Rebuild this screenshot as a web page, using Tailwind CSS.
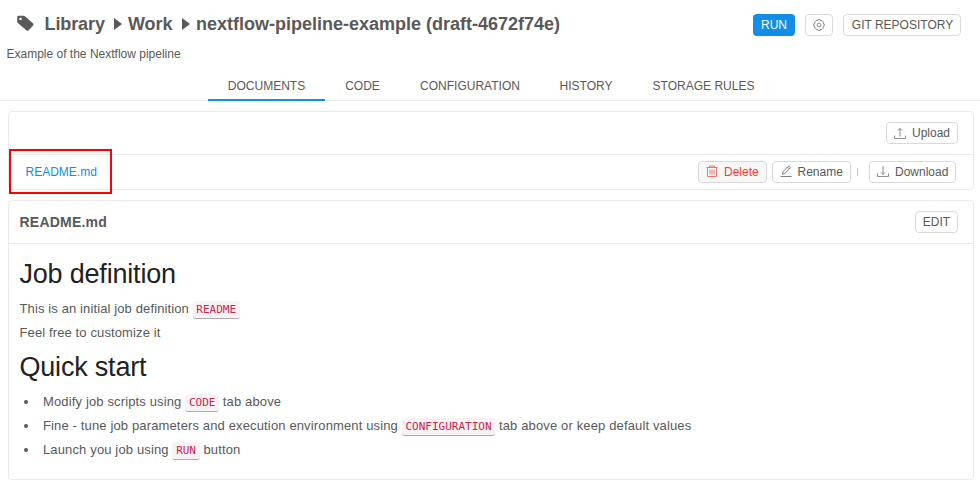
<!DOCTYPE html>
<html lang="en">
<head>
<meta charset="utf-8">
<title>nextflow-pipeline-example</title>
<script src="https://cdn.jsdelivr.net/npm/@tailwindcss/browser@4"></script>
</head>
<body class="h-[489px] overflow-hidden bg-white font-['Liberation_Sans',Arial,sans-serif] text-[12px] leading-[18px] text-[#595959]">
<header class="flex h-[45px] items-start justify-between pl-[17px] pr-[19px] pt-[14px]">
  <h1 class="flex h-[20px] items-center text-[18px] font-bold leading-[20px] whitespace-nowrap">
    <svg class="relative -top-px mr-[10.5px] h-[17px] w-[17px]" viewBox="0 0 17 17" fill="#595959"><path fill-rule="evenodd" d="M1.500.7H6.500q1 0 1.700.7l7.900 7.200q.9.900 0 1.800l-4.600 5q-.9.900-1.800 0L1.100 8.300Q.2 7.500.2 6.500V1.900Q.2.700 1.500.7ZM3.500 2.500a1.300 1.300 0 1 0 .01 0Z"/></svg>
    <span class="w-[61px] tracking-[-0.1px]">Library</span>
    <svg class="ml-[8.5px] mr-[6px] h-[12px] w-[8px]" viewBox="0 0 8 12"><path d="M0 0L8 6L0 12Z" fill="#595959"/></svg>
    <span class="w-[45px] tracking-[-0.05px]">Work</span>
    <svg class="ml-[9px] mr-[6px] h-[12px] w-[8px]" viewBox="0 0 8 12"><path d="M0 0L8 6L0 12Z" fill="#595959"/></svg>
    <span>nextflow-pipeline-example (draft-4672f74e)</span>
  </h1>
  <div class="flex gap-[10px]">
    <button class="flex h-[22px] w-[42px] items-center justify-center rounded-[4px] bg-[#108ee9] text-white">RUN</button>
    <button class="flex h-[22px] w-[28px] items-center justify-center rounded-[4px] border border-[#d9d9d9]">
      <svg class="h-[12px] w-[12px]" viewBox="0 0 12 12" fill="none" stroke="#808080" stroke-width=".9"><path d="M4.900.6h2.200l.5 1.200 1.300-.3 1.400 1.500-.3 1.200 1.200.7v2.200l-1.200.7.3 1.200-1.400 1.500-1.300-.3-.5 1.200H4.900l-.5-1.200-1.300.3L1.700 9 2 7.800.8 7.100V4.900L2 4.200 1.700 3l1.400-1.500 1.300.3Z"/><circle cx="6" cy="6" r="1.900"/></svg>
    </button>
    <button class="flex h-[22px] w-[118px] items-center justify-center rounded-[4px] border border-[#d9d9d9] pl-px whitespace-nowrap">GIT REPOSITORY</button>
  </div>
</header>
<p class="h-[26px] pl-[6.5px]">Example of the Nextflow pipeline</p>
<nav class="flex h-[30px] border-b border-[#e9e9e9] pl-[208px] whitespace-nowrap">
  <a class="h-[30px] w-[117px] border-b-2 border-[#108ee9] pt-[6px] text-center">DOCUMENTS</a>
  <a class="w-[75px] pt-[6px] text-center">CODE</a>
  <a class="w-[140px] pt-[6px] text-center">CONFIGURATION</a>
  <a class="w-[92px] pt-[6px] text-center">HISTORY</a>
  <a class="w-[143px] pt-[6px] text-center">STORAGE RULES</a>
</nav>
<main class="pl-[8px] pr-[6px] pt-[10px]">
  <section class="h-[79px] rounded-[4px] border border-[#e9e9e9]">
    <div class="flex h-[43px] items-center justify-end border-b border-[#e9e9e9] pr-[15px]">
      <button class="flex h-[22px] w-[72px] items-center rounded-[4px] border border-[#d9d9d9] pl-[7px]">
        <svg class="mr-[6px] h-[12px] w-[12px]" viewBox="0 0 12 12" fill="none" stroke="#808080" stroke-width=".9"><path d="M.5 8.500v3h11v-3M6 9.500V1.500M3.800 3.700L6 1.500 8.200 3.700"/></svg><span>Upload</span>
      </button>
    </div>
    <div class="relative flex h-[34px] items-center justify-between pl-[16.5px] pr-[17px]">
      <div class="absolute left-0 -top-[6px] h-[45px] w-[103px] border-2 border-[#f00]"></div>
      <a class="text-[#108ee9]">README.md</a>
      <div class="flex items-center">
        <button class="flex h-[22px] w-[69px] items-center rounded-[4px] border border-[#d9d9d9] bg-[#f7f7f7] pl-[7px] text-[#f04134]">
          <svg class="relative -top-px mr-[6px] h-[12px] w-[12px]" viewBox="0 0 12 12" fill="none" stroke="#f4554b" stroke-width=".8"><path d="M.5 2.500h11M3.500 2.500v-1.500h5v1.500M1.500 2.500v9h9v-9M4 4.500v5M6 4.500v5M8 4.500v5"/></svg><span>Delete</span>
        </button>
        <button class="ml-[5px] flex h-[22px] w-[79px] items-center rounded-[4px] border border-[#d9d9d9] pl-[7px]">
          <svg class="relative -top-px mr-[5.500px] h-[12px] w-[12px]" viewBox="0 0 12 12" fill="none" stroke="#707070" stroke-width=".9"><path d="M.5 11.500h11M2.500 9.300l.6-2.700L8.700.900l1.800 1.700-5.600 5.900ZM7.500 2.100l1.800 1.800"/></svg><span>Rename</span>
        </button>
        <i class="ml-[6px] h-[8px] w-px bg-[#c4c4c4]"></i>
        <button class="ml-[11px] flex h-[22px] w-[87px] items-center rounded-[4px] border border-[#d9d9d9] pl-[7px]">
          <svg class="relative -top-px mr-[6px] h-[12px] w-[12px]" viewBox="0 0 12 12" fill="none" stroke="#808080" stroke-width=".9"><path d="M.5 8.500v3h11v-3M6 1v8.500M3.800 7.300L6 9.500 8.200 7.300"/></svg><span>Download</span>
        </button>
      </div>
    </div>
  </section>
  <section class="mt-[10px] h-[280px] rounded-[4px] border border-[#e9e9e9]">
    <div class="flex h-[43px] items-center justify-between border-b border-[#e9e9e9] pl-[10.5px] pr-[15px]">
      <h2 class="text-[14px] font-bold tracking-[0.22px]">README.md</h2>
      <button class="flex h-[22px] w-[43px] items-center justify-center rounded-[4px] border border-[#d9d9d9]">EDIT</button>
    </div>
    <article class="pl-[10.5px] pt-[9px] text-[13px] leading-[24px] tracking-[0.12px]">
      <h3 class="h-[44px] text-[27px] leading-[42px] tracking-[-0.2px] text-[#222]">Job definition</h3>
      <p class="h-[24px]">This is an initial job definition <code class="inline-block h-[18px] rounded-[3px] border-b border-[#b0a9ab] bg-[#f9f2f4] px-[3.7px] align-baseline font-['DejaVu_Sans_Mono',monospace] text-[11px] leading-[17px] tracking-normal text-[#c7254e]">README</code></p>
      <p class="h-[24px]">Feel free to customize it</p>
      <h3 class="h-[45px] text-[27px] leading-[45px] tracking-[-0.2px] text-[#222]">Quick start</h3>
      <ul class="tracking-[0.14px]">
        <li class="flex h-[24px] items-center"><i class="ml-[4px] mr-[15.5px] h-[4px] w-[4px] rounded-full bg-[#595959]"></i><span class="h-[24px]">Modify job scripts using <code class="inline-block h-[18px] rounded-[3px] border-b border-[#b0a9ab] bg-[#f9f2f4] px-[3.7px] align-baseline font-['DejaVu_Sans_Mono',monospace] text-[11px] leading-[17px] tracking-normal text-[#c7254e]">CODE</code> tab above</span></li>
        <li class="flex h-[24px] items-center"><i class="ml-[4px] mr-[15.5px] h-[4px] w-[4px] rounded-full bg-[#595959]"></i><span class="h-[24px]">Fine - tune job parameters and execution environment using <code class="inline-block h-[18px] rounded-[3px] border-b border-[#b0a9ab] bg-[#f9f2f4] px-[3.7px] align-baseline font-['DejaVu_Sans_Mono',monospace] text-[11px] leading-[17px] tracking-normal text-[#c7254e]">CONFIGURATION</code> tab above or keep default values</span></li>
        <li class="flex h-[24px] items-center"><i class="ml-[4px] mr-[15.5px] h-[4px] w-[4px] rounded-full bg-[#595959]"></i><span class="h-[24px]">Launch you job using <code class="inline-block h-[18px] rounded-[3px] border-b border-[#b0a9ab] bg-[#f9f2f4] px-[3.7px] align-baseline font-['DejaVu_Sans_Mono',monospace] text-[11px] leading-[17px] tracking-normal text-[#c7254e]">RUN</code> button</span></li>
      </ul>
    </article>
  </section>
</main>
</body>
</html>
